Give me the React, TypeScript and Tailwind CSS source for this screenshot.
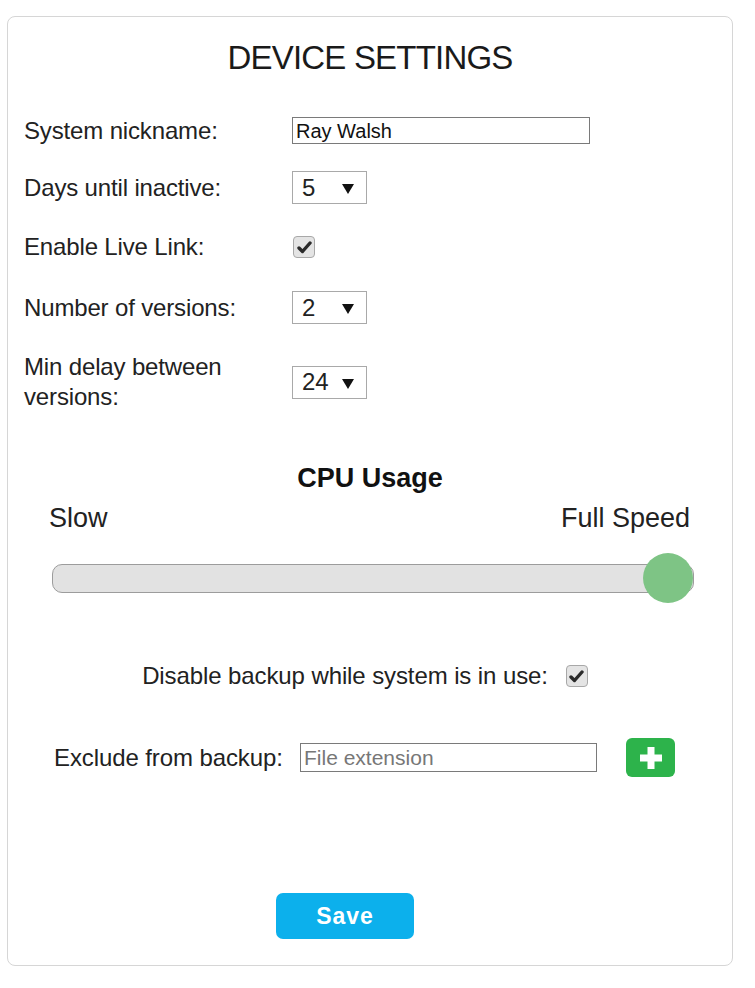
import React from "react";

function Check() {
  return (
    <div className="flex h-[22px] w-[22px] items-center justify-center rounded-[4px] border border-[#a8a8a8] bg-[#e4e4e4]">
      <svg width="15" height="13" viewBox="0 0 15 13">
        <path d="M2 7 L5.5 10.5 L13 2" fill="none" stroke="#2a2a2a" strokeWidth="3.4" strokeLinecap="round" strokeLinejoin="round" />
      </svg>
    </div>
  );
}

function Select({ value }: { value: string }) {
  return (
    <div className="relative flex h-[33px] w-[75px] items-center border border-[#a9a9a9] bg-white pl-[9px] text-[24px] leading-none text-[#222]">
      <span>{value}</span>
      <svg className="absolute right-[12px] top-[12px]" width="12" height="10" viewBox="0 0 12 10">
        <path d="M0 0 H12 L6 10 Z" fill="#111" />
      </svg>
    </div>
  );
}

export default function App() {
  return (
    <div className="min-h-[988px] w-[755px] bg-white pl-[7px] pt-[16px]" style={{ fontFamily: '"Liberation Sans", Arial, sans-serif' }}>
      <div className="flex w-[726px] flex-col rounded-[8px] border border-[#d6d6d6] bg-white pb-[26px] pt-[21px] text-[#222]">
        <h1 className="text-center text-[33px] leading-[40px] tracking-[-0.8px] text-[#1a1a1a]">DEVICE SETTINGS</h1>

        <div className="ml-[16px] mt-[39px] flex h-[27px] items-center">
          <div className="w-[268px] text-[24px] leading-[30px] tracking-[-0.15px]">System nickname:</div>
          <div className="flex h-[27px] w-[298px] items-center border border-[#7a7a7a] pl-[3px] text-[20px] text-[#111]">Ray Walsh</div>
        </div>

        <div className="ml-[16px] mt-[27px] flex h-[33px] items-center">
          <div className="w-[268px] text-[24px] leading-[30px] tracking-[-0.15px]">Days until inactive:</div>
          <Select value="5" />
        </div>

        <div className="ml-[16px] mt-[32px] flex h-[22px] items-center">
          <div className="w-[269px] text-[24px] leading-[30px] tracking-[-0.15px]">Enable Live Link:</div>
          <Check />
        </div>

        <div className="ml-[16px] mt-[33px] flex h-[33px] items-center">
          <div className="w-[268px] text-[24px] leading-[30px] tracking-[-0.15px]">Number of versions:</div>
          <Select value="2" />
        </div>

        <div className="ml-[16px] mt-[28px] flex h-[60px] items-center">
          <div className="w-[268px] text-[24px] leading-[30px] tracking-[-0.15px]">
            Min delay between
            <br />
            versions:
          </div>
          <Select value="24" />
        </div>

        <div className="mt-[50px] text-center text-[27px] font-bold leading-[32px] text-[#111]">CPU Usage</div>

        <div className="mt-[8px] flex justify-between pl-[41px] pr-[42px] text-[27px] leading-[32px]">
          <span>Slow</span>
          <span>Full Speed</span>
        </div>

        <div className="relative ml-[44px] mt-[19px] h-[50px] w-[642px]">
          <div className="absolute left-0 right-0 top-[11px] h-[29px] rounded-[10px] border border-[#9c9c9c] bg-[#e2e2e2]" />
          <div className="absolute left-[591px] top-0 h-[50px] w-[50px] rounded-full bg-[#7ec485]" />
        </div>

        <div className="mt-[61px] flex h-[24px] items-center justify-center gap-[18px] pr-[10px]">
          <span className="text-[24px] leading-[30px] tracking-[-0.1px]">Disable backup while system is in use:</span>
          <Check />
        </div>

        <div className="ml-[46px] mt-[50px] flex h-[39px] items-center">
          <span className="w-[246px] text-[24px] leading-[30px] tracking-[-0.1px]">Exclude from backup:</span>
          <div className="flex h-[29px] w-[297px] items-center border border-[#7a7a7a] pl-[3px] text-[21px] text-[#777]">File extension</div>
          <button className="ml-[29px] flex h-[39px] w-[49px] items-center justify-center rounded-[6px] bg-[#2db34b]">
            <svg width="26" height="26" viewBox="0 0 26 26">
              <path d="M13 2 V24 M2 13 H24" stroke="#fff" strokeWidth="7" />
            </svg>
          </button>
        </div>

        <button className="ml-[268px] mt-[116px] flex h-[46px] w-[138px] items-center justify-center rounded-[7px] bg-[#0cb0ec] text-[23px] font-bold tracking-[1px] text-white">
          Save
        </button>
      </div>
    </div>
  );
}
